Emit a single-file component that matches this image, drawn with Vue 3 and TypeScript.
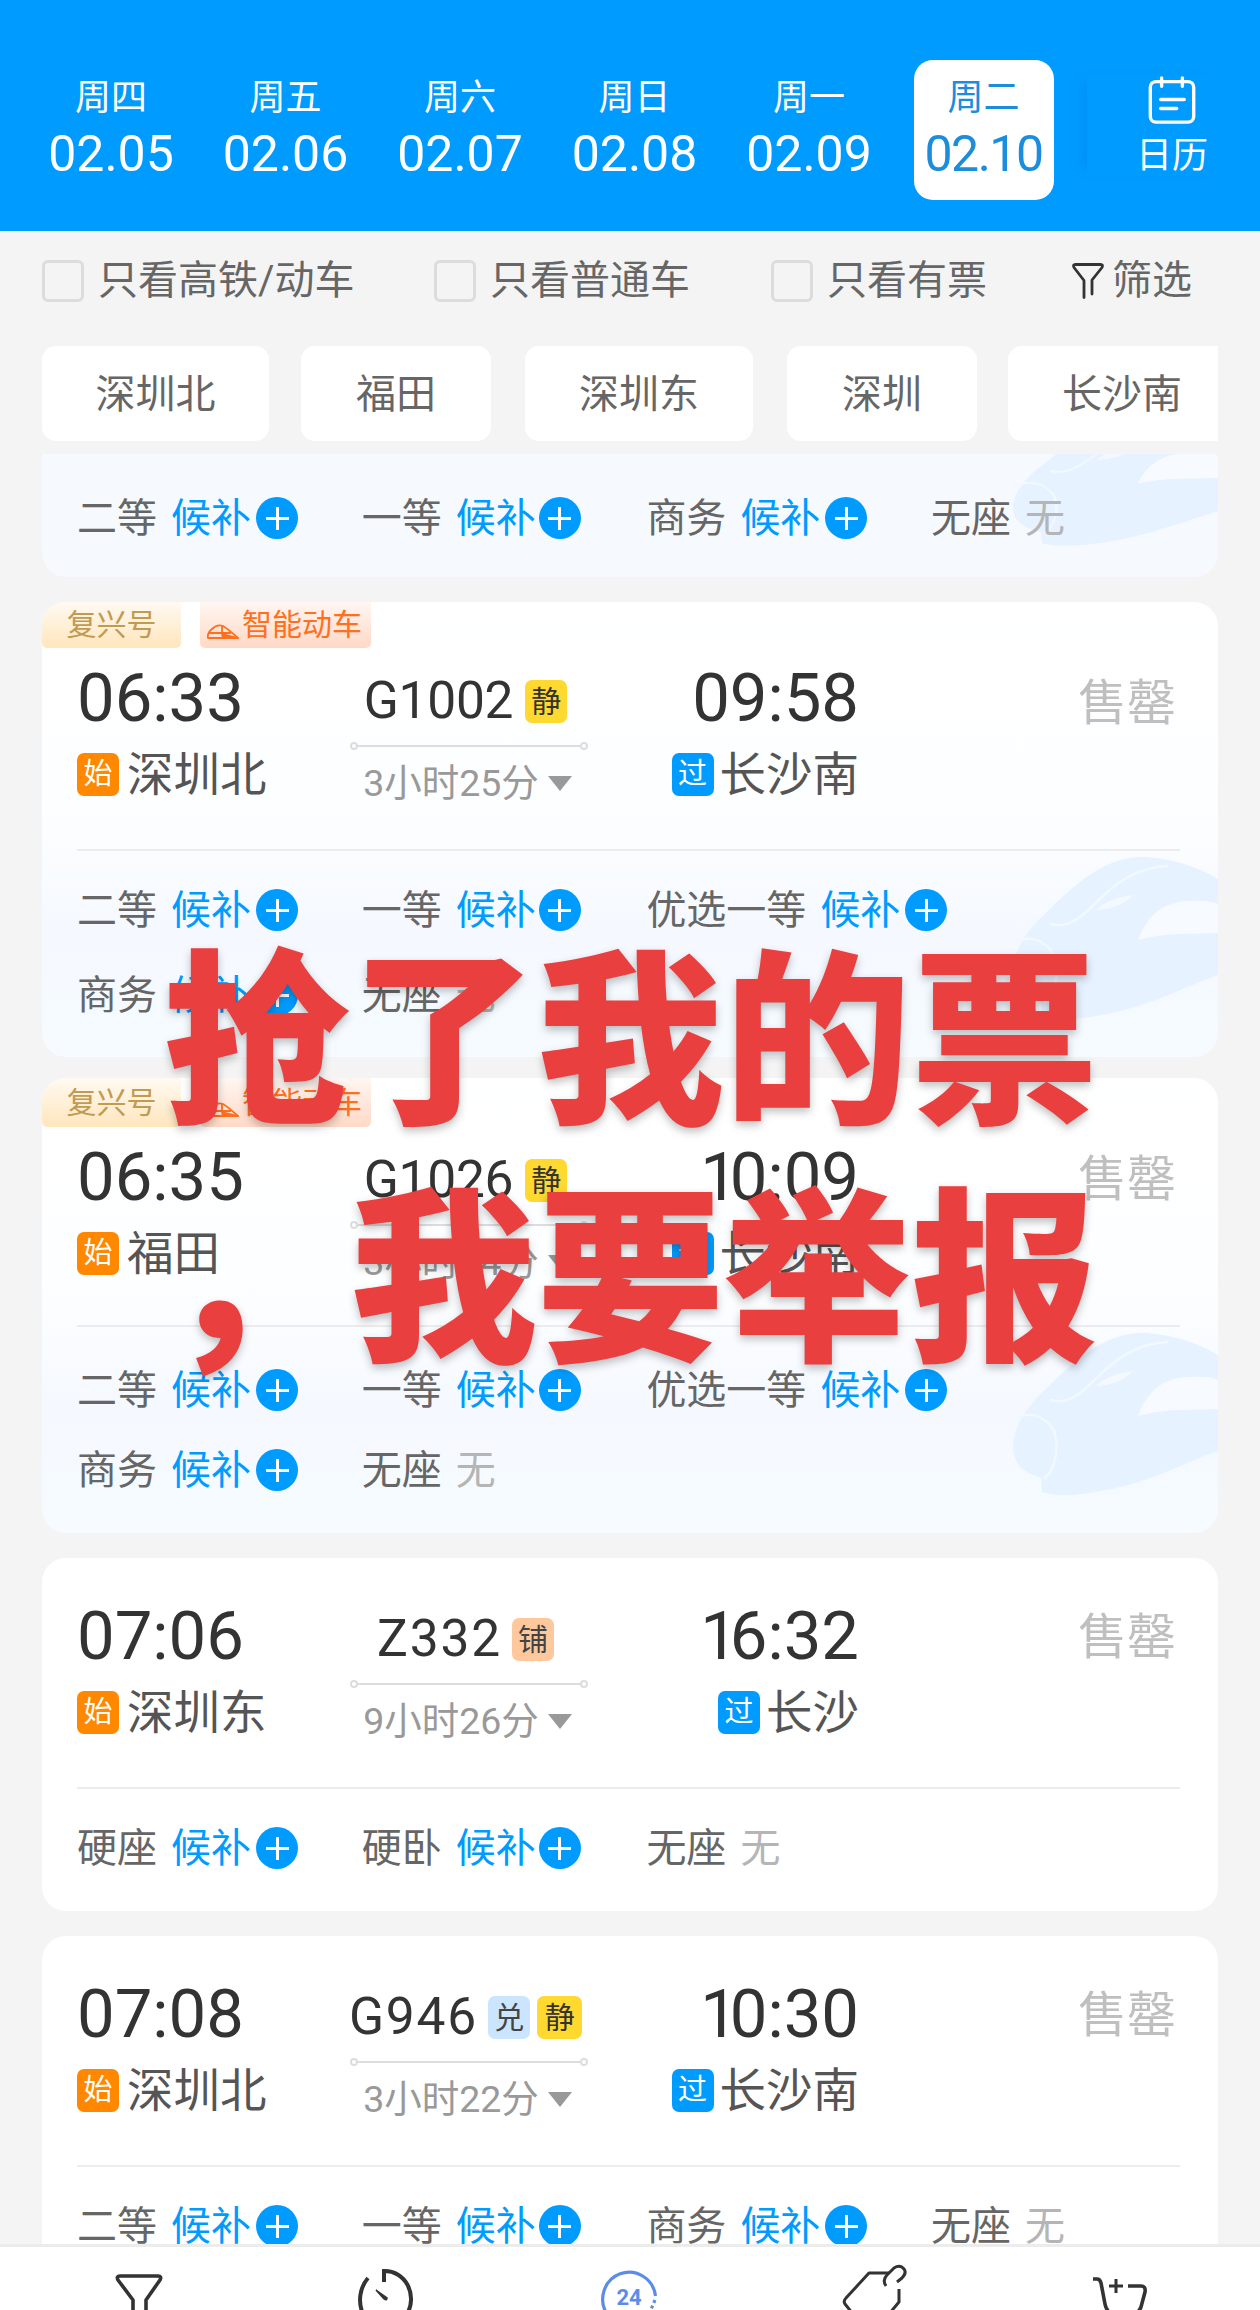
<script setup lang="ts">
interface Day { week: string; date: string; active?: boolean }
interface Seat { name: string; wait: boolean }
interface Badge { text: string; kind: 'quiet' | 'bed' | 'points' }
interface Trip {
  depart: string
  from: string
  arrive: string
  to: string
  train: string
  badges: Badge[]
  duration: string
  smart: boolean
  variant: string
  seats: Seat[]
}

const days: Day[] = [
  { week: '周四', date: '02.05' },
  { week: '周五', date: '02.06' },
  { week: '周六', date: '02.07' },
  { week: '周日', date: '02.08' },
  { week: '周一', date: '02.09' },
  { week: '周二', date: '02.10', active: true },
]
const checks: string[] = ['只看高铁/动车', '只看普通车', '只看有票']
const stations: string[] = ['深圳北', '福田', '深圳东', '深圳', '长沙南']

const wait = (name: string): Seat => ({ name, wait: true })
const none = (name: string): Seat => ({ name, wait: false })
const quiet: Badge = { text: '静', kind: 'quiet' }

const fourSeats: Seat[] = [wait('二等'), wait('一等'), wait('商务'), none('无座')]
const fiveSeats: Seat[] = [wait('二等'), wait('一等'), wait('优选一等'), wait('商务'), none('无座')]

const trips: Trip[] = [
  { depart: '06:33', from: '深圳北', arrive: '09:58', to: '长沙南', train: 'G1002', badges: [quiet], duration: '3小时25分', smart: true, variant: 'tall', seats: fiveSeats },
  { depart: '06:35', from: '福田', arrive: '10:09', to: '长沙南', train: 'G1026', badges: [quiet], duration: '3小时34分', smart: true, variant: 'tall dense', seats: fiveSeats },
  { depart: '07:06', from: '深圳东', arrive: '16:32', to: '长沙', train: 'Z332', badges: [{ text: '铺', kind: 'bed' }], duration: '9小时26分', smart: false, variant: 'short', seats: [wait('硬座'), wait('硬卧'), none('无座')] },
  { depart: '07:08', from: '深圳北', arrive: '10:30', to: '长沙南', train: 'G946', badges: [{ text: '兑', kind: 'points' }, quiet], duration: '3小时22分', smart: false, variant: 'short last', seats: fourSeats },
]
</script>

<template>
  <div class="page">
    <header class="dates">
      <div class="days">
        <div v-for="d in days" :key="d.date" class="day" :class="{ active: d.active }">
          <span class="week">{{ d.week }}</span>
          <span class="date">{{ d.date }}</span>
        </div>
      </div>
      <div class="calendar">
        <svg width="50" height="52" viewBox="0 0 50 52" fill="none" stroke="#fff" stroke-width="3.6" stroke-linecap="round">
          <rect x="2" y="6" width="46" height="43" rx="6" />
          <path d="M14 2v9M36 2v9M13 25h25M13 34.500h17" />
        </svg>
        <span>日历</span>
      </div>
    </header>

    <div class="filters">
      <label v-for="c in checks" :key="c" class="check"><i class="box"></i>{{ c }}</label>
      <div class="filter">
        <svg width="34" height="38" viewBox="0 0 34 38" fill="none" stroke="#333" stroke-width="2.8" stroke-linecap="round" stroke-linejoin="round">
          <path d="M13 35.500V18.500L3 5.500Q1.500 2.500 4.500 2.500H29.500Q32.500 2.500 31 5.500L21 18V32" />
        </svg>
        <span>筛选</span>
      </div>
    </div>

    <div class="chips">
      <div v-for="s in stations" :key="s" class="chip" :class="{ narrow: s.length === 2 }">{{ s }}</div>
    </div>

    <main class="list">
      <section class="card partial tinted">
        <svg class="rail" viewBox="0 0 210 170" preserveAspectRatio="none"><use href="#bullet" /></svg>
        <div class="seats">
          <div v-for="s in fourSeats" :key="s.name" class="seat">
            <span>{{ s.name }}</span>
            <template v-if="s.wait"><span class="wait">候补</span><i class="plus"></i></template>
            <span v-else class="none">无</span>
          </div>
        </div>
      </section>

      <section v-for="t in trips" :key="t.train" class="card" :class="[t.variant, { tinted: t.smart }]">
        <svg v-if="t.smart" class="rail" viewBox="0 0 210 170" preserveAspectRatio="none"><use href="#bullet" /></svg>
        <div v-if="t.smart" class="tags">
          <span class="tag gold">复兴号</span>
          <span class="tag orange">
            <svg width="34" height="16" viewBox="0 0 34 16" fill="none" stroke="#ff6f20" stroke-width="1.800" stroke-linejoin="round">
              <path d="M2 14Q1 9 6 5Q11 0 17 2Q22 5 32 14Z" />
              <path d="M3 9H16V2M16 9L25 9" />
              <path d="M16 10L32 14H17Z" fill="#ff6f20" />
            </svg>智能动车
          </span>
        </div>
        <div class="journey">
          <div class="end">
            <div class="time">{{ t.depart }}</div>
            <div class="station"><i class="mark start">始</i>{{ t.from }}</div>
          </div>
          <div class="mid">
            <div class="train">
              <span :class="{ wide: !t.train.includes('1') }">{{ t.train }}</span>
              <i v-for="b in t.badges" :key="b.text" class="badge" :class="b.kind">{{ b.text }}</i>
            </div>
            <div class="line"></div>
            <div class="duration">{{ t.duration }}<i class="caret"></i></div>
          </div>
          <div class="end arrive">
            <div class="time" :class="{ tight: t.arrive.startsWith('1') }">{{ t.arrive }}</div>
            <div class="station"><i class="mark pass">过</i>{{ t.to }}</div>
          </div>
          <div class="sold">售罄</div>
        </div>
        <div class="seats">
          <div v-for="s in t.seats" :key="s.name" class="seat" :class="{ span: s.name.length > 2 }">
            <span>{{ s.name }}</span>
            <template v-if="s.wait"><span class="wait">候补</span><i class="plus"></i></template>
            <span v-else class="none">无</span>
          </div>
        </div>
      </section>
    </main>

    <nav class="bar">
      <svg width="56" height="50" viewBox="0 0 56 50" fill="none" stroke="#333" stroke-width="3.600" stroke-linejoin="round">
        <path d="M21 50V36L6 16Q4 12 8 12H46Q50 12 48 16L34 36V50" />
      </svg>
      <svg class="timer" width="60" height="50" viewBox="0 0 60 50" fill="none" stroke="#333" stroke-width="4">
        <path d="M13 14A27 31 0 0 0 8 50M29 18V7A26 28 0 0 1 52 50" />
        <path d="M21 26L32 34Q32 37 29 35Z" fill="#333" stroke-width="1.500" />
      </svg>
      <svg class="service" width="60" height="50" viewBox="0 0 60 50" fill="none" stroke="#5b8de8" stroke-width="3.200">
        <path d="M8 50A26.500 27 0 1 1 56.500 32" />
        <path d="M56 36L50 50" stroke-dasharray="3 3" />
        <text x="30" y="40.500" text-anchor="middle" class="hours">24</text>
      </svg>
      <svg class="label" width="70" height="50" viewBox="0 0 70 50" fill="none" stroke="#333" stroke-width="3" stroke-linejoin="round">
        <path d="M13 50L5 40Q3 37 6 34L29 9H49M59 25V38L49 50" />
        <path d="M46 22Q42 16 47 11L54 4Q60 0 64 5Q67 9 62 14L57 18" />
      </svg>
      <svg width="60" height="50" viewBox="0 0 60 50" fill="none" stroke="#333" stroke-width="3.600">
        <path d="M3 15H7Q10 15 11 19L15 40Q16 46 21 50M38 22H51Q56 22 55 28L51 43Q49 48 45 50" />
        <path d="M26 15V29M19 22H33" stroke-width="3" />
      </svg>
    </nav>

    <div class="caption">抢了我的票<br />，我要举报</div>

    <svg class="defs" width="0" height="0">
      <symbol id="bullet" viewBox="0 0 210 170" preserveAspectRatio="none">
        <path d="M5 117C6 96 18 78 42 56C70 28 98 5 133 4C160 4 190 14 210 26V122C180 133 150 148 120 156C90 164 55 170 34 163L33 149C15 143 5 135 5 117Z" fill="#e6f2ff" />
        <path d="M130 87C138 66 152 48 182 48Q200 47 210 51V80L170 81Q148 82 130 87Z" fill="#f7fbff" />
        <path d="M88 57Q100 45 125 42Q112 56 88 57Z" fill="#f4f9ff" />
        <path d="M42 71C60 76 72 66 95 43Q125 14 160 13M5 91C22 80 38 88 46 102C52 122 46 142 36 150" fill="none" stroke="#f1f8ff" stroke-width="2.500" />
      </symbol>
    </svg>
  </div>
</template>

<style>
body { margin: 0; }
</style>

<style scoped>
.page {
  position: relative;
  width: 1260px;
  height: 2310px;
  overflow: hidden;
  display: flex;
  flex-direction: column;
  background: #f4f4f4;
  color: #666;
  font-family: Roboto, "Noto Sans CJK SC", sans-serif;
  font-size: 40px;
}
i { font-style: normal; }

.dates {
  flex: none;
  height: 231px;
  box-sizing: border-box;
  padding: 60px 37px 0 41px;
  display: flex;
  justify-content: space-between;
  background: #009bff;
  color: #fff;
}
.days { display: flex; gap: 34.500px; }
.day {
  width: 140px;
  height: 140px;
  border-radius: 19px;
  display: flex;
  flex-direction: column;
  align-items: center;
}
.day.active { background: #fff; color: #1c8ddd; }
.day.active .date { letter-spacing: -1.500px; }
.week { font-size: 36px; line-height: 40px; margin-top: 18px; }
.date { font-size: 50px; line-height: 60px; margin-top: 6px; }
.calendar {
  width: 136px;
  height: 101px;
  margin-top: 15px;
  padding: 1px 0 0 34px;
  box-sizing: border-box;
  display: flex;
  flex-direction: column;
  align-items: center;
  font-size: 36px;
  line-height: 40px;
  box-shadow: -12px 0 12px -8px rgba(0, 110, 220, 0.25);
}
.calendar span { margin-top: 11px; }

.filters {
  flex: none;
  height: 100px;
  padding-left: 42px;
  display: flex;
  align-items: center;
  line-height: 46px;
}
.check { display: flex; align-items: center; }
.check:nth-child(1) { width: 392px; }
.check:nth-child(2) { width: 337px; }
.check:nth-child(3) { width: 300px; }
.box {
  width: 42px;
  height: 42px;
  box-sizing: border-box;
  border: 3px solid #dcdcdc;
  border-radius: 6px;
  margin-right: 14px;
}
.filter { display: flex; align-items: center; gap: 7px; }

.chips {
  flex: none;
  margin: 15px 42px 0;
  display: flex;
  gap: 34px;
  overflow: hidden;
}
.chip {
  flex: none;
  width: 228px;
  height: 95px;
  border-radius: 14px;
  background: #fff;
  text-align: center;
  line-height: 97px;
}
.chip.narrow { width: 190px; }
.chip:nth-child(1) { width: 227px; }
.chip:nth-child(2) { margin-left: -2px; }
.chip:nth-child(5) { margin-left: -3px; }

.list { flex: none; height: 1790px; margin-top: 13px; padding: 0 42px; overflow: hidden; }
.card {
  position: relative;
  box-sizing: border-box;
  overflow: hidden;
  padding: 0 35px;
  background: #fff;
  border-radius: 24px;
}
.tinted { background: linear-gradient(#fff 0%, #fdfeff 45%, #f5f9ff 72%, #f6fbff 100%); }
.partial { height: 123px; border-radius: 0 0 24px 24px; background: #f6faff; margin-bottom: 25px; }
.tall { height: 455px; margin-bottom: 21px; }
.dense { margin-bottom: 25px; }
.short { height: 353px; margin-bottom: 25px; }

.rail { position: absolute; right: 0; bottom: 34px; width: 210px; height: 170px; }
.partial .rail { bottom: 28px; height: 134px; }
.defs { position: absolute; }

.tags { display: flex; gap: 19px; margin: 0 -35px; height: 46px; }
.dense .tags { height: 49px; }
.tag { display: flex; align-items: center; justify-content: center; font-size: 30px; line-height: 36px; border-radius: 0 0 5px 5px; }
.gold { width: 139px; color: #c29a50; background: linear-gradient(#fffaf2, #ffe6bd); }
.orange { width: 171px; color: #ff6f20; background: linear-gradient(#fff6f2, #ffd9c6); }
.orange svg { margin: 14px 2px 0 -3px; }

.journey { display: flex; height: 229px; margin-right: 3px; border-bottom: 2px solid #ececec; color: #333; }
.tall .journey { height: 201px; }
.dense .journey { height: 198px; }
.end { width: 274px; margin-top: 46px; }
.tall .end, .tall .mid { margin-top: 18px; }
.time { font-size: 67px; line-height: 64px; }
.time.tight::first-letter { letter-spacing: -8px; }
.station { display: flex; align-items: center; height: 46px; margin-top: 22px; font-size: 46.500px; line-height: 50px; color: #555; white-space: nowrap; }
.mark { width: 42px; height: 43px; margin-top: -1px; border-radius: 7px; margin-right: 8px; color: #fff; font-size: 29px; line-height: 43px; text-align: center; }
.start { background: #ff8800; }
.pass { background: #009bff; margin-right: 6px; }
.mid { width: 236px; margin-top: 46px; display: flex; flex-direction: column; align-items: center; }
.train { display: flex; align-items: center; height: 70px; margin-left: -7px; font-size: 51.500px; line-height: 62px; letter-spacing: -0.300px; color: #333; white-space: nowrap; }
.wide { letter-spacing: 1.800px; }
.badge { width: 42px; height: 43px; border-radius: 7px; font-size: 30px; line-height: 43px; text-align: center; color: #444; margin-left: 12px; }
.wide + .badge { margin-left: 10px; }
.badge + .badge { margin-left: 7px; width: 45px; }
.quiet { background: #ffd830; color: #333; }
.bed { background: #ffc79c; }
.points { background: #cbe5ff; }
.line { position: relative; width: 224px; height: 2px; margin-top: 9px; background: #ddd; }
.line::before, .line::after {
  content: "";
  position: absolute;
  top: -3px;
  width: 4px;
  height: 4px;
  border: 2px solid #ddd;
  border-radius: 50%;
}
.line::before { left: -7px; }
.line::after { right: -7px; }
.duration { display: flex; align-items: center; height: 44px; margin: 14px 3px 0 0; font-size: 37.500px; line-height: 44px; color: #999; white-space: nowrap; }
.caret { border: 12px solid transparent; border-top: 15px solid #999; border-bottom: 0; margin-left: 9px; }
.arrive { width: 272px; display: flex; flex-direction: column; align-items: flex-end; }
.sold { margin: 45px 4px 0 auto; font-size: 49px; line-height: 70px; color: #bfbfbf; }
.tall .sold { margin-top: 21px; }
.dense .sold { margin-top: 18px; }

.seats { position: relative; display: grid; grid-template-columns: repeat(4, 284.700px); row-gap: 43px; padding-top: 38px; }
.dense .seats { padding-top: 42px; row-gap: 38px; }
.partial .seats { padding-top: 43px; }
.seat { display: flex; align-items: center; height: 42px; line-height: 46px; white-space: nowrap; }
.seat > span { margin-top: 1px; }
.seat.span { grid-column: span 2; }
.wait { margin-left: 14px; color: #009bff; }
.none { margin-left: 14px; color: #b5b5b5; }
.plus {
  flex: none;
  width: 42px;
  height: 42px;
  margin-left: 5px;
  border-radius: 50%;
  background:
    linear-gradient(#fff, #fff) center / 23px 3px no-repeat,
    linear-gradient(#fff, #fff) center / 3px 23px no-repeat,
    #009bff;
}
.seat:nth-child(2) .plus { margin-left: 3px; }

.bar {
  flex: 1;
  border-top: 3px solid #ececec;
  background: #fff;
  display: flex;
  justify-content: space-between;
  align-items: flex-start;
  padding: 17px 110px 0 112px;
}
.timer { margin: 0 -4px 0 4px; }
.service { margin: 0 -5px 0 5px; }
.label { margin: 0 -3px 0 3px; }
.hours { font: 700 22px Roboto, sans-serif; fill: #5b8de8; stroke: none; }

.caption {
  position: absolute;
  left: 163px;
  top: 909px;
  font-family: "Noto Sans CJK SC", sans-serif;
  font-weight: 900;
  font-size: 187px;
  line-height: 238px;
  color: #ea3f3f;
  white-space: nowrap;
  text-shadow: 0 4px 8px rgba(0, 0, 0, 0.25);
}
</style>
